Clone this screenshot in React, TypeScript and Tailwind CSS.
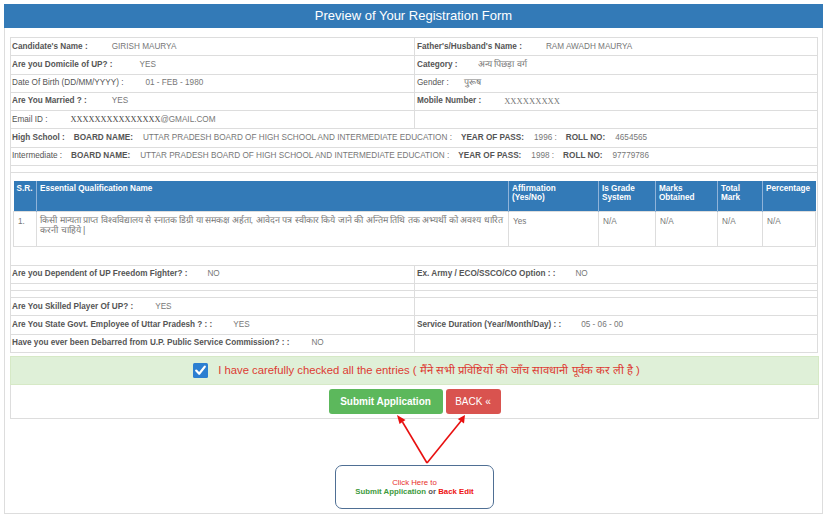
import React from 'react'

// Registration form preview — static mock of the submitted data

function Label({ children, className = '' }: { children: React.ReactNode; className?: string }) {
  return <span className={`font-bold text-[#555] whitespace-nowrap ${className}`}>{children}</span>
}

function Val({ children, className = '' }: { children: React.ReactNode; className?: string }) {
  return <span className={`text-[#777] whitespace-nowrap ${className}`}>{children}</span>
}

function Row({ left, right, h = 'h-[18.3px]' }: { left?: React.ReactNode; right?: React.ReactNode; h?: string }) {
  return (
    <div className={`flex border-b border-[#ddd] ${h}`}>
      <div className="flex items-center pl-[1px] w-[404px] border-r border-[#ddd]">{left}</div>
      <div className="flex items-center pl-[2px] flex-1">{right}</div>
    </div>
  )
}

function FullRow({ children }: { children: React.ReactNode }) {
  return <div className="flex items-center pl-[1px] h-[18.3px] border-b border-[#ddd]">{children}</div>
}

const cols = [
  { name: ['S.R.'], w: 'w-[23px]' },
  { name: ['Essential Qualification Name'], w: 'w-[472px]' },
  { name: ['Affirmation', '(Yes/No)'], w: 'w-[90px]' },
  { name: ['Is Grade', 'System'], w: 'w-[57px]' },
  { name: ['Marks', 'Obtained'], w: 'w-[62px]' },
  { name: ['Total', 'Mark'], w: 'w-[45px]' },
  { name: ['Percentage'], w: 'w-[53px]' },
]

export default function App() {
  return (
    <div className="relative w-[830px] h-[514px] bg-white overflow-hidden font-['Liberation_Sans',Arial,sans-serif] text-[8.2px]">
      <div className="ml-[4px] mt-[4px] w-[819px] h-[24px] bg-[#337ab7] text-white text-center text-[13px] leading-[24px]">
        Preview of Your Registration Form
      </div>

      <div className="ml-[4px] w-[819px] h-[486px] border-x border-b border-[#ddd] pl-[5px] pt-[9px]">
        <div className="w-[808px] border-x border-t border-[#ddd]">
          <Row
            left={<><Label>Candidate's Name :</Label><Val className="ml-[24px]">GIRISH MAURYA</Val></>}
            right={<><Label>Father's/Husband's Name :</Label><Val className="ml-[24px]">RAM AWADH MAURYA</Val></>}
          />
          <Row
            left={<><Label>Are you Domicile of UP? :</Label><Val className="ml-[27px]">YES</Val></>}
            right={<><Label>Category :</Label><Val className="ml-[20px] text-[9px]">अन्य पिछड़ा वर्ग</Val></>}
          />
          <Row
            left={<><Label className="font-normal">Date Of Birth (DD/MM/YYYY) :</Label><Val className="ml-[22px]">01 - FEB - 1980</Val></>}
            right={<><Label className="font-normal">Gender :</Label><Val className="ml-[15px] text-[9px]">पुरूष</Val></>}
          />
          <Row
            left={<><Label>Are You Married ? :</Label><Val className="ml-[25px]">YES</Val></>}
            right={<><Label>Mobile Number :</Label><Val className="ml-[23px] font-['Liberation_Serif',serif] text-[8.6px] text-[#444]">XXXXXXXXX</Val></>}
          />
          <Row
            left={<><Label className="font-normal">Email ID :</Label><Val className="ml-[23px]"><span className="font-['Liberation_Serif',serif] text-[8.3px] text-[#444]">XXXXXXXXXXXXXXX</span>@GMAIL.COM</Val></>}
          />
          <FullRow>
            <Label>High School :</Label>
            <Label className="ml-[9px]">BOARD NAME:</Label>
            <Val className="ml-[10px]">UTTAR PRADESH BOARD OF HIGH SCHOOL AND INTERMEDIATE EDUCATION :</Val>
            <Label className="ml-[9px]">YEAR OF PASS:</Label>
            <Val className="ml-[10px]">1996 :</Val>
            <Label className="ml-[9px]">ROLL NO:</Label>
            <Val className="ml-[10px]">4654565</Val>
          </FullRow>
          <FullRow>
            <Label className="font-normal">Intermediate :</Label>
            <Label className="ml-[9px]">BOARD NAME:</Label>
            <Val className="ml-[10px]">UTTAR PRADESH BOARD OF HIGH SCHOOL AND INTERMEDIATE EDUCATION :</Val>
            <Label className="ml-[9px]">YEAR OF PASS:</Label>
            <Val className="ml-[10px]">1998 :</Val>
            <Label className="ml-[9px]">ROLL NO:</Label>
            <Val className="ml-[10px]">97779786</Val>
          </FullRow>
          <div className="h-[7px] border-b border-[#ddd]" />

          <div className="border-b border-[#ddd] pt-[8px] pb-[18px] pl-[2px]">
            <table className="w-[802px] table-fixed border-collapse">
              <thead>
                <tr>
                  {cols.map(c => (
                    <th
                      key={c.name[0]}
                      className={`${c.w} h-[30px] bg-[#337ab7] text-white font-bold text-left align-top px-[3px] pt-[3px] leading-[9px] border-r border-[#8fb3d9] last:border-r-0`}
                    >
                      {c.name.map(n => <div key={n}>{n}</div>)}
                    </th>
                  ))}
                </tr>
              </thead>
              <tbody>
                <tr className="text-[#777] align-top leading-[10px]">
                  <td className="h-[35px] border border-[#ddd] px-[4px] pt-[5px]">1.</td>
                  <td className="border border-[#ddd] px-[3px] pt-[3px] text-[9px] leading-[10px]">
                    किसी मान्यता प्राप्त विश्वविद्यालय से स्नातक डिग्री या समकक्ष अर्हता, आवेदन पत्र स्वीकार किये जाने की अन्तिम तिथि तक अभ्यर्थी को अवश्य धारित करनी चाहिये |
                  </td>
                  <td className="border border-[#ddd] px-[4px] pt-[5px]">Yes</td>
                  <td className="border border-[#ddd] px-[4px] pt-[5px]">N/A</td>
                  <td className="border border-[#ddd] px-[4px] pt-[5px]">N/A</td>
                  <td className="border border-[#ddd] px-[4px] pt-[5px]">N/A</td>
                  <td className="border border-[#ddd] px-[4px] pt-[5px]">N/A</td>
                </tr>
              </tbody>
            </table>
          </div>

          <Row
            h="h-[18.5px]"
            left={<><Label>Are you Dependent of UP Freedom Fighter? :</Label><Val className="ml-[20px]">NO</Val></>}
            right={<><Label>Ex. Army / ECO/SSCO/CO Option : :</Label><Val className="ml-[20px]">NO</Val></>}
          />
          <Row h="h-[7px]" />
          <Row h="h-[7px]" />
          <Row left={<><Label>Are You Skilled Player Of UP? :</Label><Val className="ml-[22px]">YES</Val></>} />
          <Row
            left={<><Label>Are You State Govt. Employee of Uttar Pradesh ? : :</Label><Val className="ml-[21px]">YES</Val></>}
            right={<><Label>Service Duration (Year/Month/Day) : :</Label><Val className="ml-[20px]">05 - 06 - 00</Val></>}
          />
          <Row left={<><Label>Have you ever been Debarred from U.P. Public Service Commission? : :</Label><Val className="ml-[22px]">NO</Val></>} />
        </div>

        <div className="w-[809px] mt-[3px] h-[29px] bg-[#dff0d8] border border-[#d6e9c6] flex items-center justify-center gap-[10px]">
          <svg width="15" height="15" viewBox="0 0 15 15" className="ml-[4px]">
            <rect x="0" y="0" width="15" height="15" rx="1.5" fill="#2c7fd1" />
            <path d="M3.2 7.6 L6.2 10.8 L11.8 3.6" stroke="#fff" strokeWidth="2.2" fill="none" strokeLinecap="round" strokeLinejoin="round" />
          </svg>
          <span className="text-[#dd3b33] text-[11.3px] whitespace-nowrap">
            I have carefully checked all the entries ( मैंने सभी प्रविष्टियों की जाँच सावधानी पूर्वक कर ली है )
          </span>
        </div>

        <div className="w-[809px] h-[34px] border-x border-b border-[#ddd] flex items-center justify-center gap-[3px]">
          <button className="w-[114px] h-[25px] rounded-[3px] bg-[#5cb85c] text-white font-bold text-[10px]">Submit Application</button>
          <button className="w-[55px] h-[25px] rounded-[3px] bg-[#d9534f] text-white text-[10px]">BACK «</button>
        </div>

        <div className="w-[809px] flex justify-center pt-[46px]">
          <div className="w-[159px] h-[44px] rounded-[7px] border-[1.5px] border-[#4f6f94] flex flex-col items-center justify-center text-[7.8px] leading-[9px]">
            <span className="text-[#e8302c]">Click Here to</span>
            <span className="font-bold whitespace-nowrap">
              <span className="text-[#3d9a3d]">Submit Application</span>
              <span className="text-[#555]"> or </span>
              <span className="text-[#ee1111]">Back Edit</span>
            </span>
          </div>
        </div>
      </div>

      {/* annotation arrows pointing at the buttons */}
      <svg className="absolute left-0 top-0 pointer-events-none" width="830" height="514" viewBox="0 0 830 514">
        <line x1="427" y1="463" x2="402.5" y2="422" stroke="#e81010" strokeWidth="1.6" />
        <polygon points="397,415 405.5,420 399.5,424" fill="#e81010" />
        <line x1="427" y1="463" x2="461" y2="421" stroke="#e81010" strokeWidth="1.6" />
        <polygon points="465,415 464,423.5 457.8,419" fill="#e81010" />
      </svg>
    </div>
  )
}
